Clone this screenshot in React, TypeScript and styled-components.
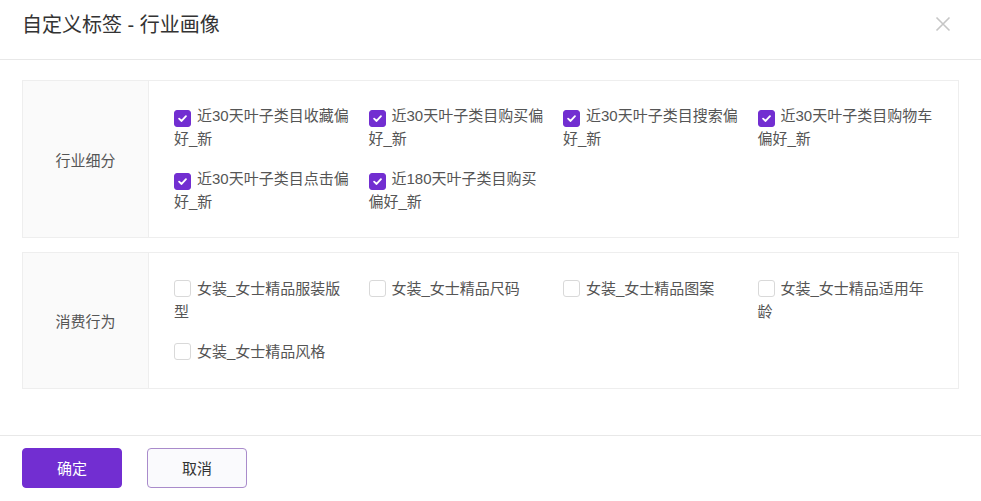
import styled, { createGlobalStyle } from "styled-components";

const GlobalStyle = createGlobalStyle`
  * {
    box-sizing: border-box;
  }
  body {
    margin: 0;
    background: #fff;
    font-family: "Liberation Sans", "Noto Sans CJK SC", sans-serif;
    color: #333;
  }
`;

const Modal = styled.div`
  width: 981px;
  height: 501px;
  display: flex;
  flex-direction: column;
  background: #fff;
`;

const Header = styled.div`
  height: 60px;
  display: flex;
  align-items: center;
  justify-content: space-between;
  padding: 0 28px 12px 22px;
  border-bottom: 1px solid #e8e8e8;
`;

const Title = styled.h2`
  margin: 0;
  font-size: 20px;
  font-weight: 400;
  color: #333;
`;

const CloseBtn = styled.button`
  border: none;
  background: none;
  padding: 0;
  width: 20px;
  height: 20px;
  display: flex;
  align-items: center;
  justify-content: center;
  cursor: pointer;
`;

const Body = styled.div`
  flex: 1;
  padding: 20px 22px 0 22px;
  display: flex;
  flex-direction: column;
  gap: 14px;
`;

const Section = styled.div`
  display: flex;
  border: 1px solid #eeeeee;
`;

const SectionLabel = styled.div`
  width: 126px;
  flex-shrink: 0;
  background: #fafafa;
  border-right: 1px solid #eeeeee;
  display: flex;
  align-items: center;
  justify-content: center;
  font-size: 15px;
  color: #555;
`;

const Options = styled.div<{ $top: number }>`
  flex: 1;
  padding: ${(p) => p.$top}px 0 24px 25px;
  display: grid;
  grid-template-columns: repeat(4, 194.5px);
  row-gap: 18px;
`;

const Option = styled.label`
  width: 178px;
  font-size: 15px;
  line-height: 22.5px;
  color: #555;
  cursor: pointer;
`;

const Box = styled.span<{ $checked: boolean }>`
  display: inline-flex;
  align-items: center;
  justify-content: center;
  width: 17px;
  height: 17px;
  margin-right: 6px;
  vertical-align: -3px;
  border-radius: 3px;
  border: 1px solid ${(p) => (p.$checked ? "#722ed1" : "#d9d9d9")};
  background: ${(p) => (p.$checked ? "#722ed1" : "#fff")};
`;

const Footer = styled.div`
  height: 66px;
  border-top: 1px solid #e8e8e8;
  display: flex;
  align-items: center;
  gap: 25px;
  padding: 0 22px 2px 22px;
`;

const Button = styled.button<{ $primary?: boolean }>`
  width: 100px;
  height: 40px;
  border-radius: 4px;
  font-size: 15px;
  font-family: inherit;
  cursor: pointer;
  border: 1px solid ${(p) => (p.$primary ? "#722ed1" : "#a98bcb")};
  background: ${(p) => (p.$primary ? "#722ed1" : "#fafafd")};
  color: ${(p) => (p.$primary ? "#fff" : "#333")};
`;

function Check({ label, checked }: { label: string; checked: boolean }) {
  return (
    <Option>
      <Box $checked={checked}>
        {checked && (
          <svg width="11" height="11" viewBox="0 0 12 12">
            <path
              d="M2.3 6.2 L5 8.7 L9.8 3.5"
              fill="none"
              stroke="#fff"
              strokeWidth="2"
              strokeLinecap="round"
              strokeLinejoin="round"
            />
          </svg>
        )}
      </Box>
      {label}
    </Option>
  );
}

const industry = [
  "近30天叶子类目收藏偏好_新",
  "近30天叶子类目购买偏好_新",
  "近30天叶子类目搜索偏好_新",
  "近30天叶子类目购物车偏好_新",
  "近30天叶子类目点击偏好_新",
  "近180天叶子类目购买偏好_新",
];

const consume = [
  "女装_女士精品服装版型",
  "女装_女士精品尺码",
  "女装_女士精品图案",
  "女装_女士精品适用年龄",
  "女装_女士精品风格",
];

export default function App() {
  return (
    <>
      <GlobalStyle />
      <Modal>
        <Header>
          <Title>自定义标签 - 行业画像</Title>
          <CloseBtn aria-label="close">
            <svg width="16" height="16" viewBox="0 0 16 16">
              <path
                d="M1.5 1.5 L14.5 14.5 M14.5 1.5 L1.5 14.5"
                stroke="#c6c6c6"
                strokeWidth="1.6"
              />
            </svg>
          </CloseBtn>
        </Header>
        <Body>
          <Section>
            <SectionLabel>行业细分</SectionLabel>
            <Options $top={24}>
              {industry.map((t) => (
                <Check key={t} label={t} checked />
              ))}
            </Options>
          </Section>
          <Section>
            <SectionLabel>消费行为</SectionLabel>
            <Options $top={25}>
              {consume.map((t) => (
                <Check key={t} label={t} checked={false} />
              ))}
            </Options>
          </Section>
        </Body>
        <Footer>
          <Button $primary>确定</Button>
          <Button>取消</Button>
        </Footer>
      </Modal>
    </>
  );
}
